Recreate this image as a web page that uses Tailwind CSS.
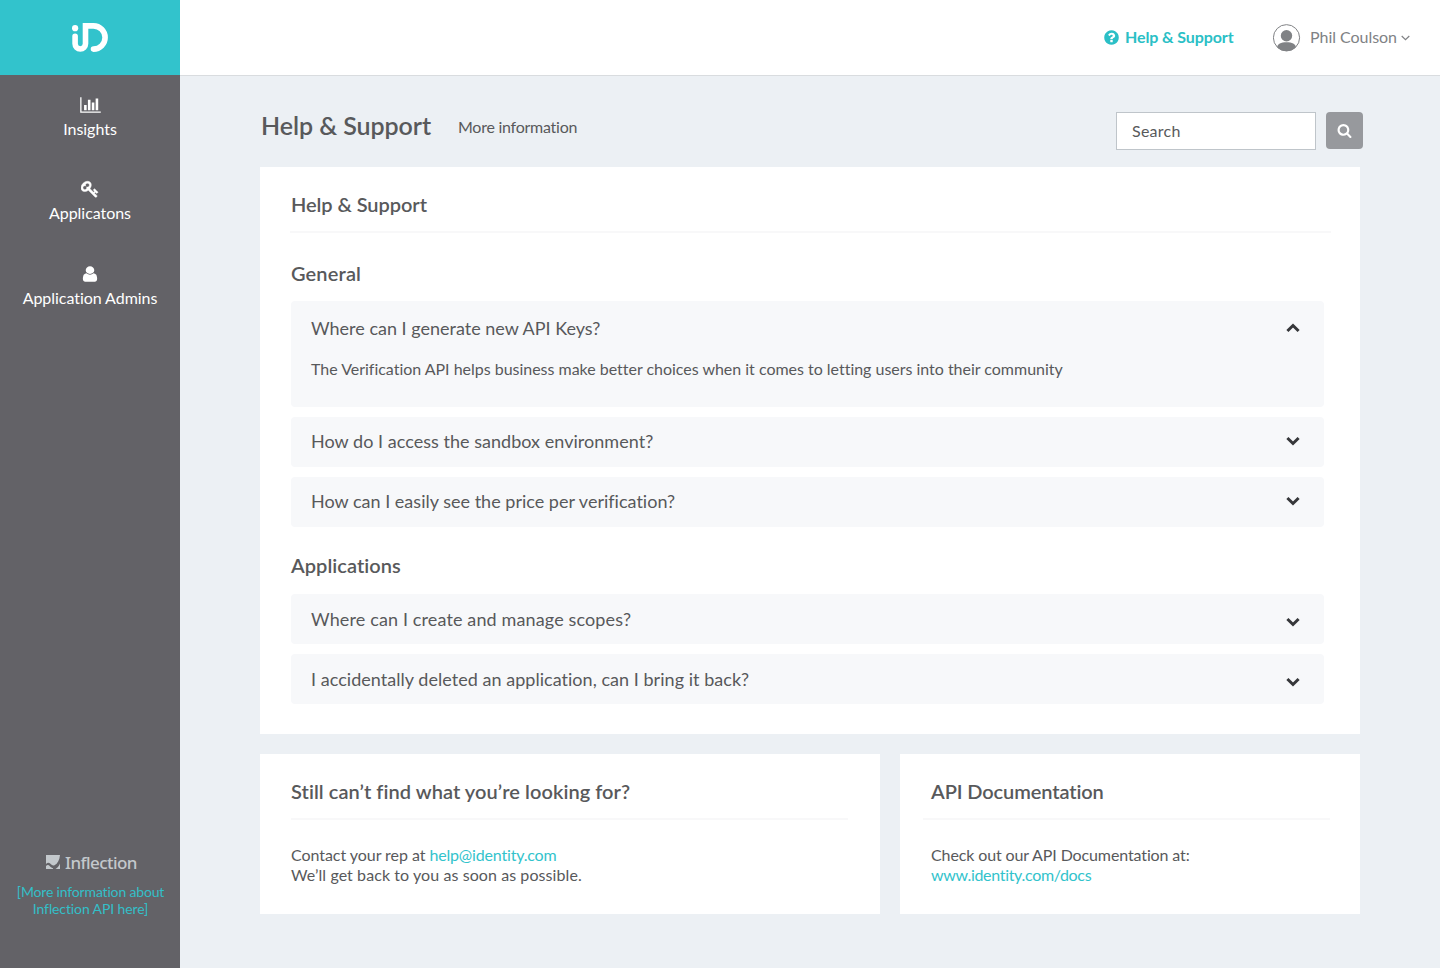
<!DOCTYPE html>
<html lang="en">
<head>
<meta charset="utf-8">
<title>Help &amp; Support</title>
<script src="https://cdn.jsdelivr.net/npm/@tailwindcss/browser@4"></script>
</head>
<body class="flex h-[968px] w-[1440px] overflow-hidden bg-[#ecf0f4] font-['Lato','Liberation_Sans',sans-serif] text-base text-[#58595b] [font-variant-ligatures:none]">

<aside class="flex w-[180px] shrink-0 flex-col bg-[#636267] text-white">
  <div class="flex h-[75px] items-center justify-center bg-[#32c3cc]">
    <svg class="h-[75px] w-[180px]" viewBox="0 0 180 75" fill="none" stroke="#fff" stroke-width="5.6" stroke-linecap="round">
      <circle cx="75.1" cy="28.2" r="3.1" fill="#fff" stroke="none"/>
      <path d="M75.1 36.2v7.6a5.2 5.2 0 0 0 10.4 0V25.9h8a11.6 11.6 0 0 1 0 23.2"/>
    </svg>
  </div>
  <nav class="flex flex-col items-center text-center leading-5">
    <a class="mt-[21px] flex h-[84px] flex-col items-center">
      <svg class="h-[18px] w-[21px]" viewBox="0 0 2048 1792" fill="#fff"><path d="M640 896v512h-256v-512h256zm384-512v1024h-256v-1024h256zm1024 1152v128h-2048v-1536h128v1408h1920zm-640-896v768h-256v-768h256zm384-384v1152h-256v-1152h256z"/></svg>
      <span class="mt-[5px] tracking-[-0.03px]">Insights</span>
    </a>
    <a class="flex h-[85px] flex-col items-center">
      <svg class="h-[18px] w-[18px]" viewBox="0 0 1792 1792" fill="#fff" stroke="#fff" stroke-width="50"><path d="M832 512q0-80-56-136t-136-56-136 56-56 136q0 42 19 83-41-19-83-19-80 0-136 56t-56 136 56 136 136 56 136-56 56-136q0-42-19-83 41 19 83 19 80 0 136-56t56-136zm851 704q0 17-49 66t-66 49q-9 0-28.5-16t-36.5-33-38.5-40-24.5-26l-96 96 220 220q28 28 28 68 0 42-39 81t-81 39q-40 0-68-28l-671-671q-176 131-365 131-163 0-265.5-102.5t-102.5-265.5q0-160 95-313t248-248 313-95q163 0 265.5 102.5t102.5 265.5q0 189-131 365l355 355 96-96q-3-3-26-24.5t-40-38.5-33-36.5-16-28.5q0-17 49-66t66-49q13 0 23 10 6 6 46 44.5t82 79.5 86.5 86 73 78 28.5 41z"/></svg>
      <span class="mt-[5px] tracking-[-0.05px]">Applicatons</span>
    </a>
    <a class="flex flex-col items-center">
      <svg class="h-[18px] w-[20px]" viewBox="0 0 1792 1792" preserveAspectRatio="none" fill="#fff"><path d="M1536 1399q0 109-62.5 187t-150.5 78h-854q-88 0-150.5-78t-62.5-187q0-85 8.5-160.5t31.5-152 58.5-131 94-89 134.5-34.5q131 128 313 128t313-128q76 0 134.500 34.500t94 89 58.500 131 31.500 152 8.500 160.500zm-256-887q0 159-112.500 271.500t-271.500 112.500-271.500-112.500-112.500-271.500 112.500-271.500 271.500-112.500 271.500 112.500 112.500 271.500z"/></svg>
      <span class="mt-[5px] tracking-[-0.04px]">Application Admins</span>
    </a>
  </nav>
  <div class="mt-auto flex flex-col items-center pb-[51px]">
    <div class="flex h-6 items-center gap-[5px] pl-[3px] text-[#c3c8cc]">
      <svg class="h-[14px] w-[14px]" viewBox="0 0 14 14" fill="currentColor"><path d="M0 0h14c-.4 4.800-2.300 8.600-5.500 10.300C6.600 11.200 5.300 9.700 4.200 8.600 2.800 7.300 1.200 7.900 0 9z"/><path d="M0 11c1.500-1.400 2.600-1.100 3.900.2 1 1 2 1.900 3.300 1.900l-.5.900H0zM14 8.500V14H9.500c2-1.200 3.500-3 4.500-5.500z"/></svg>
      <span class="mt-px whitespace-nowrap font-['Noto_Sans',sans-serif] text-[17px] font-medium leading-6 tracking-[-0.58px]">Inflection</span>
    </div>
    <p class="mt-[9px] pl-px text-center text-sm leading-[17px] tracking-[-0.17px] text-[#33bfc8]">[More information about<br><span class="tracking-[-0.12px]">Inflection API here]</span></p>
  </div>
</aside>

<div class="flex min-w-0 flex-1 flex-col">
  <header class="flex h-[76px] shrink-0 items-center justify-end border-b border-[#d9dcdf] bg-white pr-[29px]">
    <a class="flex items-center gap-[5px] font-bold tracking-[-0.1px] text-[#2bbfc6]">
      <svg class="-mt-px h-[17px] w-[17px]" viewBox="0 0 1792 1792" fill="currentColor"><path d="M1024 1376v-192q0-14-9-23t-23-9h-192q-14 0-23 9t-9 23v192q0 14 9 23t23 9h192q14 0 23-9t9-23zm256-672q0-88-55.500-163t-138.500-116-170-41q-243 0-371 213-15 24 8 42l132 100q7 6 19 6 16 0 25-12 53-68 86-92 34-24 86-24 48 0 85.500 26t37.500 59q0 38-20 61t-68 45q-63 28-115.500 86.500t-52.500 125.500v36q0 14 9 23t23 9h192q14 0 23-9t9-23q0-19 21.500-49.500t54.500-49.500q32-18 49-28.500t46-35 44.500-48 28-60.500 12.500-81zm384 192q0 209-103 385.500t-279.500 279.500-385.500 103-385.500-103-279.500-279.500-103-385.500 103-385.500 279.500-279.500 385.500-103 385.500 103 279.500 279.500 103 385.500z"/></svg>
      <span class="-mt-px">Help &amp; Support</span>
    </a>
    <a class="ml-[39.500px] flex items-center text-[#808285]">
      <svg class="h-[28px] w-[28px]" viewBox="0.5 0.250 28 28">
        <clipPath id="ring"><circle cx="14" cy="14" r="13.500"/></clipPath>
        <g clip-path="url(#ring)" fill="#808285"><circle cx="14" cy="12" r="5.700"/><path d="M4.800 28v-4.500c0-3.200 3.600-4.900 9.200-4.900s9.200 1.700 9.200 4.900V28z"/></g>
        <circle cx="14" cy="14" r="13.100" fill="none" stroke="#808285" stroke-width="1"/>
      </svg>
      <span class="-mt-px ml-[9px] tracking-[-0.04px]">Phil Coulson</span>
      <svg class="ml-1 mt-px h-[6px] w-[10px]" viewBox="0.5 0 10 6" fill="none" stroke="#808285" stroke-width="1.200"><path d="M1.200 1 5 4.700 8.800 1"/></svg>
    </a>
  </header>

  <main class="flex flex-col pl-20">
    <div class="flex h-[91px] w-[1103px] pt-9">
      <h1 class="-mt-px ml-px whitespace-nowrap text-[25px] font-semibold leading-7 tracking-[-0.07px]">Help &amp; Support</h1>
      <span class="ml-[27px] mt-[5px] leading-5 tracking-[-0.250px]">More information</span>
      <div class="ml-auto flex h-[38px] w-[200px] items-center border border-[#bfc5ca] bg-white pb-px pl-[15px] tracking-[0.250px]">Search</div>
      <div class="ml-[10px] flex h-[37px] w-[37px] items-center justify-center rounded bg-[#97999d]">
        <svg class="h-[15px] w-[15px]" viewBox="0 0 1792 1792" fill="#fff"><path d="M1216 832q0-185-131.500-316.500t-316.500-131.500-316.500 131.500-131.500 316.500 131.500 316.500 316.500 131.500 316.500-131.500 131.500-316.500zm512 832q0 52-38 90t-90 38q-54 0-90-38l-343-342q-179 124-399 124-143 0-273.500-55.500t-225-150-150-225-55.500-273.500 55.500-273.500 150-225 225-150 273.500-55.500 273.500 55.500 225 150 150 225 55.500 273.500q0 220-124 399l343 343q37 37 37 90z"/></svg>
      </div>
    </div>

    <section class="h-[567px] w-[1100px] bg-white pl-[31px] pr-9 pt-[25px]">
      <h2 class="text-xl font-semibold leading-6 tracking-[-0.06px]">Help &amp; Support</h2>
      <div class="-ml-px -mr-[7px] mt-[15px] h-[2px] bg-[#f8f8f9]"></div>

      <h3 class="mt-7 text-xl font-semibold leading-6 tracking-[0.15px]">General</h3>
      <div class="mt-4 flex flex-col gap-[10px] text-[18px] leading-6">
        <div class="h-[106px] rounded bg-[#f7f8fa] pl-5 pr-6 pt-[15px]">
          <div class="flex items-center justify-between">
            <span>Where can I generate new API Keys?</span>
            <svg class="h-[10px] w-[14px]" viewBox="0 0 14 10" fill="none" stroke="#36373a" stroke-width="3"><path d="M1.400 8 7 2.500 12.600 8"/></svg>
          </div>
          <p class="mt-[19px] whitespace-nowrap text-base leading-5 tracking-[-0.018px]">The Verification API helps business make better choices when it comes to letting users into their community</p>
        </div>
        <div class="flex h-[50px] items-center justify-between rounded bg-[#f7f8fa] pb-[2px] pl-5 pr-6">
          <span class="tracking-[0.03px]">How do I access the sandbox environment?</span>
          <svg class="h-[10px] w-[14px]" viewBox="0 0 14 10" fill="none" stroke="#36373a" stroke-width="3"><path d="M1.400 2 7 7.500 12.600 2"/></svg>
        </div>
        <div class="flex h-[50px] items-center justify-between rounded bg-[#f7f8fa] pb-[2px] pl-5 pr-6">
          <span class="tracking-[0.01px]">How can I easily see the price per verification?</span>
          <svg class="h-[10px] w-[14px]" viewBox="0 0 14 10" fill="none" stroke="#36373a" stroke-width="3"><path d="M1.400 2 7 7.500 12.600 2"/></svg>
        </div>
      </div>

      <h3 class="mt-[26px] text-xl font-semibold leading-6 tracking-[0.05px]">Applications</h3>
      <div class="mt-[17px] flex flex-col gap-[10px] text-[18px] leading-6">
        <div class="flex h-[50px] items-center justify-between rounded bg-[#f7f8fa] pl-5 pr-6">
          <span class="tracking-[0.13px]">Where can I create and manage scopes?</span>
          <svg class="mt-[5px] h-[10px] w-[14px]" viewBox="0 0 14 10" fill="none" stroke="#36373a" stroke-width="3"><path d="M1.400 2 7 7.500 12.600 2"/></svg>
        </div>
        <div class="flex h-[50px] items-center justify-between rounded bg-[#f7f8fa] pl-5 pr-6">
          <span class="tracking-[0.035px]">I accidentally deleted an application, can I bring it back?</span>
          <svg class="mt-[5px] h-[10px] w-[14px]" viewBox="0 0 14 10" fill="none" stroke="#36373a" stroke-width="3"><path d="M1.400 2 7 7.500 12.600 2"/></svg>
        </div>
      </div>
    </section>

    <div class="mt-5 flex gap-5">
      <section class="h-40 w-[620px] bg-white pl-[31px] pt-[25px]">
        <h2 class="text-xl font-semibold leading-6 tracking-[0.06px]">Still can’t find what you’re looking for?</h2>
        <div class="mt-[15px] h-[2px] w-[557px] bg-[#f8f8f9]"></div>
        <p class="mt-[25px] leading-5 tracking-[-0.05px]">Contact your rep at <a class="tracking-[-0.180px] text-[#32c3cc]">help@identity.com</a></p>
        <p class="leading-5 tracking-[0.08px]">We’ll get back to you as soon as possible.</p>
      </section>
      <section class="h-40 w-[460px] bg-white pl-[31px] pt-[25px]">
        <h2 class="text-xl font-semibold leading-6 tracking-[-0.1px]">API Documentation</h2>
        <div class="-ml-2 mt-[15px] h-[2px] w-[407px] bg-[#f8f8f9]"></div>
        <p class="mt-[25px] leading-5 tracking-[-0.12px]">Check out our API Documentation at:</p>
        <p class="leading-5 tracking-[-0.310px] text-[#32c3cc]">www.identity.com/docs</p>
      </section>
    </div>
  </main>
</div>
</body>
</html>
